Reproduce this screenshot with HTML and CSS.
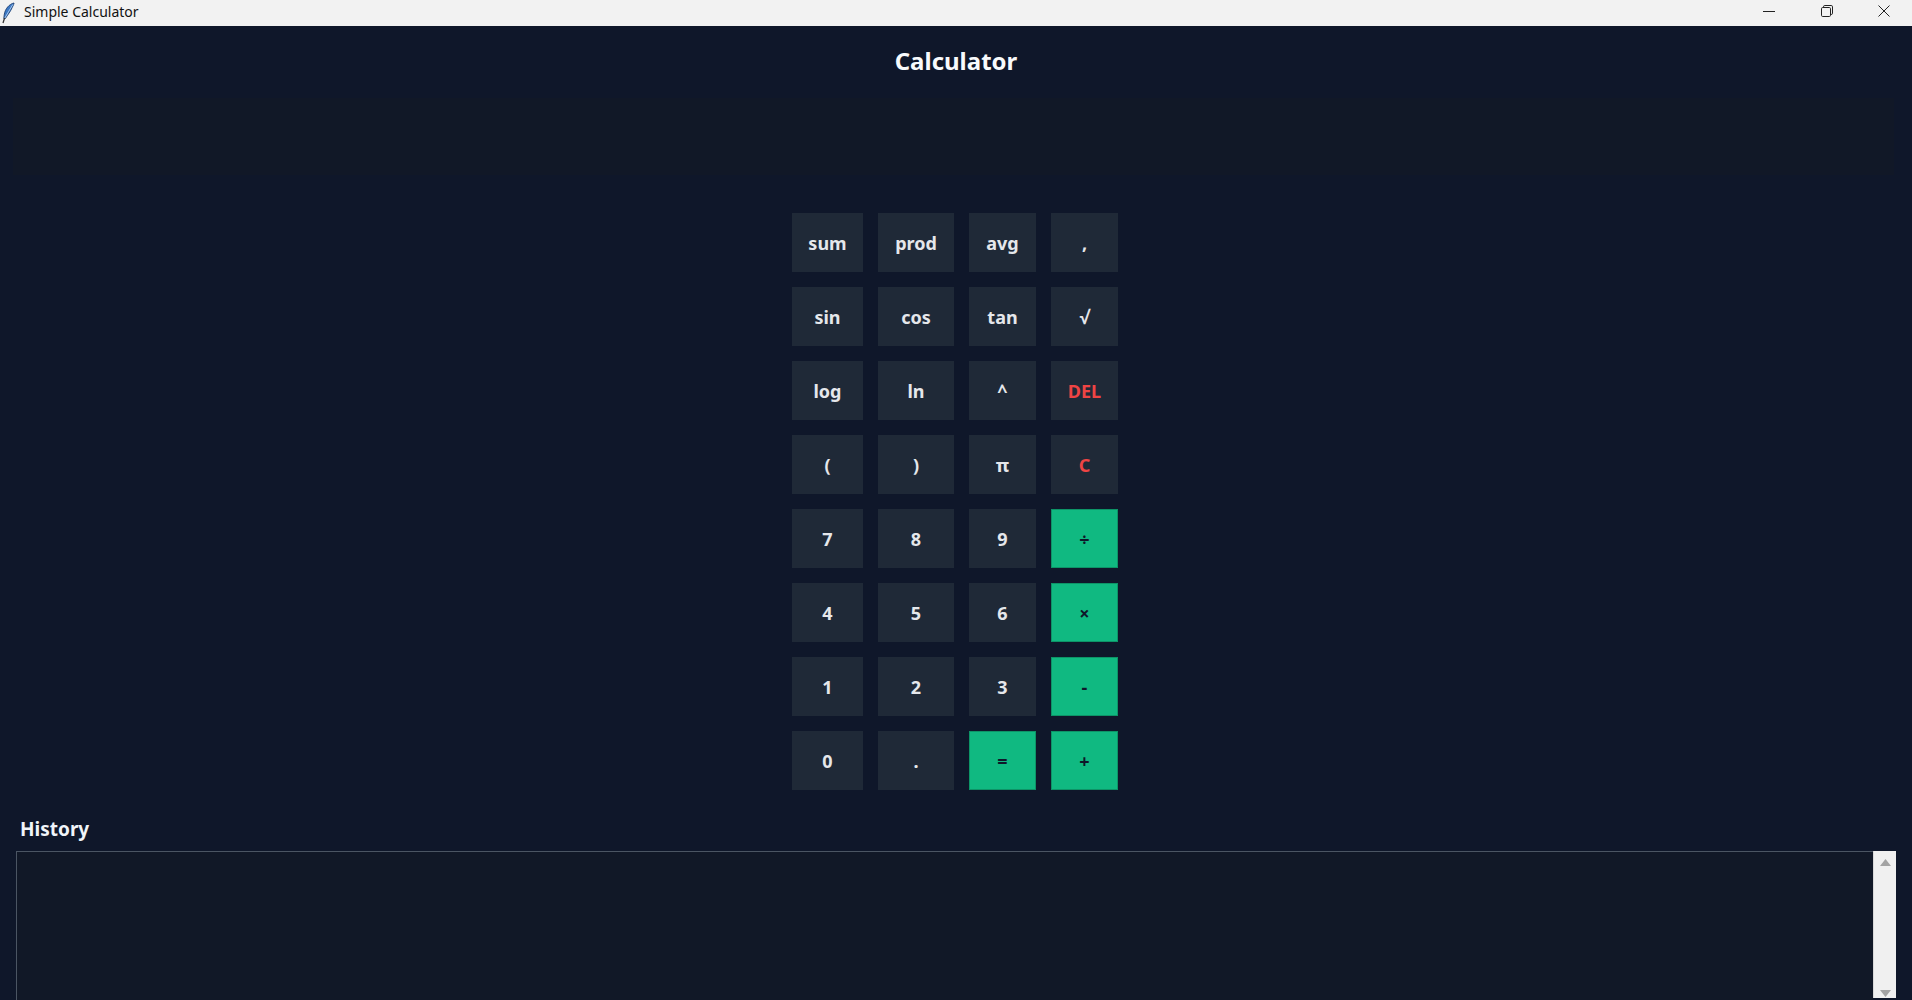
FILE: index.html
```html
<!DOCTYPE html>
<html>
<head>
<meta charset="utf-8">
<title>Simple Calculator</title>
<link rel="stylesheet" href="styles.css">
</head>
<body>
<div class="titlebar">
  <svg class="app-icon" width="14" height="22" viewBox="0 0 14 22">
    <path d="M13 1 C8.5 2 4 6.5 3.2 13 L2.8 16.5 L4.4 16.5 C6.5 13 9.5 9.5 11.2 5.5 C12.3 3.2 13 2 13 1 Z" fill="#3b78c4" stroke="#1d3f73" stroke-width="0.9"/>
    <path d="M11.8 2.5 L3.8 16" stroke="#b3d0f2" stroke-width="0.9"/>
    <path d="M3.6 16 L2 21" stroke="#333" stroke-width="1.3"/>
  </svg>
  <span class="win-title">Simple Calculator</span>
  <div class="win-controls">
    <span class="ctl"><svg width="12" height="12" viewBox="0 0 12 12"><path d="M0 6.5 H12" stroke="#222" stroke-width="1"/></svg></span>
    <span class="ctl"><svg width="12" height="12" viewBox="0 0 12 12"><rect x="0.5" y="2.5" width="9" height="9" rx="1.2" fill="none" stroke="#222"/><path d="M2.5 2.5 V1.8 Q2.5 0.5 3.8 0.5 H10.2 Q11.5 0.5 11.5 1.8 V8.2 Q11.5 9.5 10.2 9.5 H9.5" fill="none" stroke="#222"/></svg></span>
    <span class="ctl close"><svg width="12" height="12" viewBox="0 0 12 12"><path d="M0.5 0.5 L11.5 11.5 M11.5 0.5 L0.5 11.5" stroke="#222" stroke-width="1"/></svg></span>
  </div>
</div>
<main class="app">
  <h1 class="heading">Calculator</h1>
  <div class="display"></div>
  <div class="keypad">
    <button class="key">sum</button>
    <button class="key">prod</button>
    <button class="key">avg</button>
    <button class="key">,</button>
    <button class="key">sin</button>
    <button class="key">cos</button>
    <button class="key">tan</button>
    <button class="key">√</button>
    <button class="key">log</button>
    <button class="key">ln</button>
    <button class="key">^</button>
    <button class="key danger">DEL</button>
    <button class="key">(</button>
    <button class="key">)</button>
    <button class="key">π</button>
    <button class="key danger">C</button>
    <button class="key">7</button>
    <button class="key">8</button>
    <button class="key">9</button>
    <button class="key op">÷</button>
    <button class="key">4</button>
    <button class="key">5</button>
    <button class="key">6</button>
    <button class="key op">×</button>
    <button class="key">1</button>
    <button class="key">2</button>
    <button class="key">3</button>
    <button class="key op">-</button>
    <button class="key">0</button>
    <button class="key">.</button>
    <button class="key op">=</button>
    <button class="key op">+</button>
  </div>
  <div class="history-label">History</div>
  <div class="history">
    <div class="history-list"></div>
    <div class="scrollbar">
      <svg width="11" height="7" viewBox="0 0 11 7"><path d="M0 7 L5.5 0 L11 7 Z" fill="#a3a3a3"/></svg>
      <svg width="11" height="7" viewBox="0 0 11 7"><path d="M0 0 L5.5 7 L11 0 Z" fill="#a3a3a3"/></svg>
    </div>
  </div>
</main>
</body>
</html>
```

FILE: styles.css
```css
html, body {
  margin: 0;
  padding: 0;
  height: 100%;
  overflow: hidden;
}
body {
  background: #0f172a;
  font-family: "Noto Sans", "Open Sans", sans-serif;
}
.titlebar {
  height: 26px;
  background: #f2f2f2;
  display: flex;
  align-items: center;
  color: #111;
}
.app-icon {
  margin-left: 1px;
  margin-right: 9px;
}
.win-title {
  font-size: 14px;
  line-height: 26px;
  padding-bottom: 2px;
}
.win-controls {
  margin-left: auto;
  display: flex;
  height: 100%;
}
.ctl {
  width: 58px;
  display: flex;
  align-items: center;
  justify-content: center;
  margin-top: -4px;
}
.ctl.close {
  width: 56px;
}
.app {
  display: flex;
  flex-direction: column;
}
.heading {
  margin: 19px 0 0;
  height: 32px;
  line-height: 32px;
  font-size: 24px;
  font-weight: 700;
  color: #f8fafc;
  text-align: center;
}
.display {
  margin: 21px 18px 0 13px;
  height: 77px;
  background: #111827;
}
.keypad {
  margin: 38px auto 0;
  position: relative;
  left: -1px;
  display: grid;
  grid-template-columns: 71px 76px 67px 67px;
  grid-auto-rows: 59px;
  gap: 15px;
}
.key {
  border: none;
  padding: 0;
  margin: 0;
  background: #1f2937;
  color: #e5e7eb;
  font-family: "Noto Sans", "Open Sans", sans-serif;
  font-size: 18px;
  font-weight: 700;
  display: flex;
  align-items: center;
  justify-content: center;
}
.key.danger {
  color: #ef4444;
}
.key.op {
  background: #10b981;
  color: #0f172a;
  outline: 1px solid #0d9467;
  outline-offset: -1px;
}
.history-label {
  margin: 27px 0 0 20px;
  height: 24px;
  line-height: 24px;
  font-size: 19px;
  font-weight: 700;
  color: #f1f5f9;
}
.history {
  margin: 10px 16px 0 16px;
  display: flex;
  height: 200px;
}
.history-list {
  flex: 1;
  background: #111827;
  border: 1px solid #4b5563;
  border-right: none;
}
.scrollbar {
  width: 23px;
  background: #f0f0f0;
  border-left: 1px solid #d9d9d9;
  display: flex;
  flex-direction: column;
  align-items: center;
  justify-content: space-between;
  padding: 8px 0 0;
  box-sizing: border-box;
  height: 147px;
}
.scrollbar svg:last-child {
  margin-bottom: 1px;
}
```
